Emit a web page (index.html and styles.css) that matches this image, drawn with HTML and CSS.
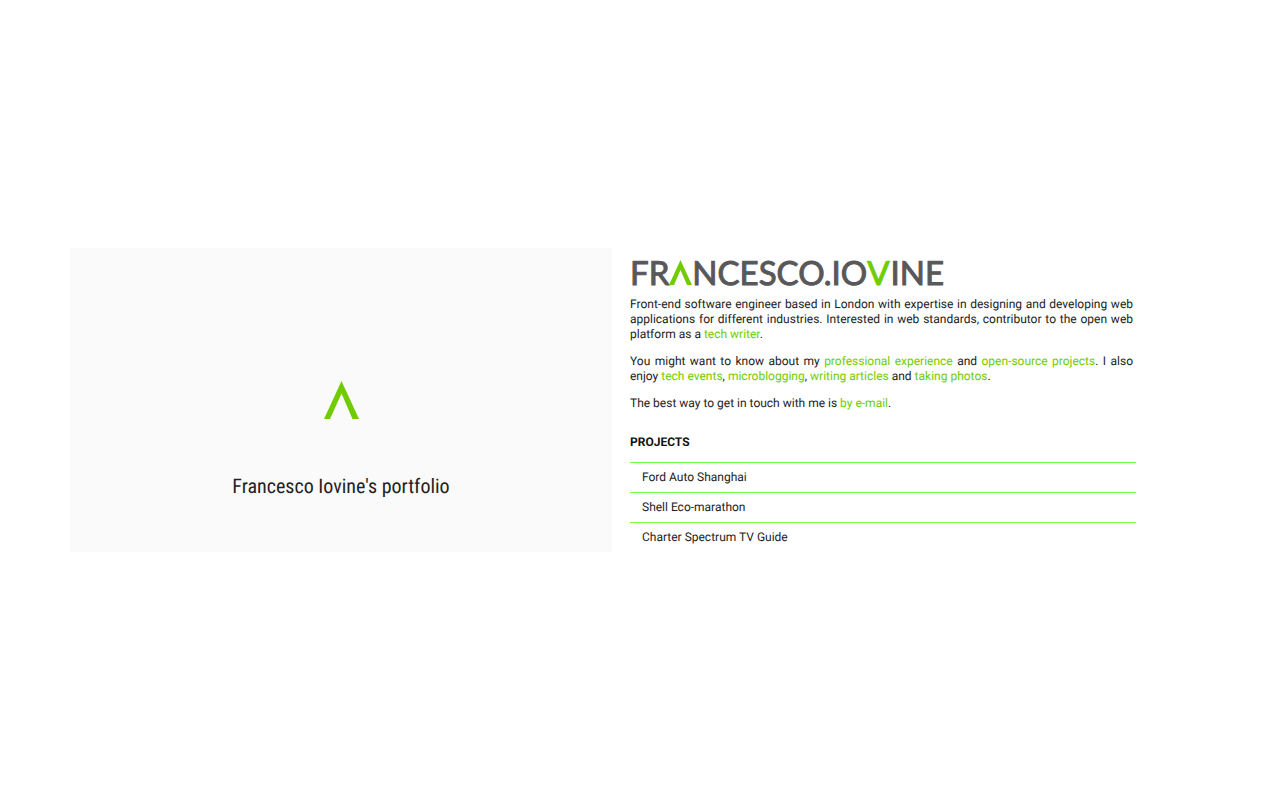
FILE: index.html
```html
<!DOCTYPE html>
<html lang="en">
<head>
<meta charset="utf-8">
<meta name="viewport" content="width=device-width, initial-scale=1">
<title>Francesco Iovine's portfolio</title>
<link rel="stylesheet" href="styles.css">
</head>
<body>
<main class="page">
  <section class="cover">
    <svg class="cover-mark" viewBox="0 0 35 38" aria-hidden="true"><path d="M0 38 17.500 0 35 38H28.500L17.500 12.500 6 38Z"/></svg>
    <p class="cover-title">Francesco Iovine's portfolio</p>
  </section>
  <section class="about">
    <h1 class="wordmark" aria-label="Francesco.Iovine"><span>FR</span><svg class="wordmark-a" viewBox="0 0 23 25" aria-hidden="true"><path d="M0 25 11.500 0 23 25H18L11.500 10 5 25Z"/></svg><span>NCESCO.IO</span><span class="accent">V</span><span>INE</span></h1>
    <div class="bio">
      <p>Front-end software engineer based in London with expertise in designing and developing web applications for different industries. Interested in web standards, contributor to the open web platform as a <a href="#writer">tech writer</a>.</p>
      <p>You might want to know about my <a href="#experience">professional experience</a> and <a href="#open-source">open-source projects</a>. I also enjoy <a href="#events">tech events</a>, <a href="#microblog">microblogging</a>, <a href="#articles">writing articles</a> and <a href="#photos">taking photos</a>.</p>
      <p>The best way to get in touch with me is <a href="#email">by e-mail</a>.</p>
    </div>
    <h2 class="heading">PROJECTS</h2>
    <ul class="projects">
      <li>Ford Auto Shanghai</li>
      <li>Shell Eco-marathon</li>
      <li>Charter Spectrum TV Guide</li>
    </ul>
  </section>
</main>
</body>
</html>
```
FILE: styles.css
```css
* { box-sizing: border-box; }
body {
  margin: 0;
  background: #fff;
  color: #222;
  font: 12px/15px Roboto, "Liberation Sans", sans-serif;
  text-rendering: geometricPrecision;
}
.page {
  display: grid;
  grid-template-columns: 542fr 524fr;
  align-content: center;
  min-height: 100vh;
  padding: 0 144px 0 70px;
}
.cover {
  display: flex;
  flex-direction: column;
  align-items: center;
  justify-content: center;
  gap: 54px;
  padding-top: 80px;
  background: #fafafa;
}
.cover-mark { width: 35px; height: 38px; fill: #70cc00; }
.cover-title {
  margin: 0;
  font: 20px/26px "Roboto Condensed", "Liberation Sans Narrow", Roboto, sans-serif;
}
.about { padding: 12px 0 0 18px; }
.wordmark {
  display: flex;
  align-items: center;
  height: 25px;
  margin: 0 0 12px;
  color: #58585a;
  font: 400 33px/24px Lato, sans-serif;
  -webkit-text-stroke: 1px currentColor;
}
.wordmark-a { width: 23px; height: 25px; fill: #70cc00; stroke: none; }
.accent { padding: 0 1px 0 0; color: #70cc00; }
.bio { padding-right: 3px; text-align: justify; }
.bio p { margin: 0 0 12px; }
a { color: #70cc00; text-decoration: none; }
.heading { margin: 24px 0 12px; font-size: 12px; line-height: 15px; font-weight: 700; color: #111; }
.projects { margin: 0; padding: 0; list-style: none; }
.projects li { padding: 7px 12px; border-top: 1px solid #7f4; }
```
